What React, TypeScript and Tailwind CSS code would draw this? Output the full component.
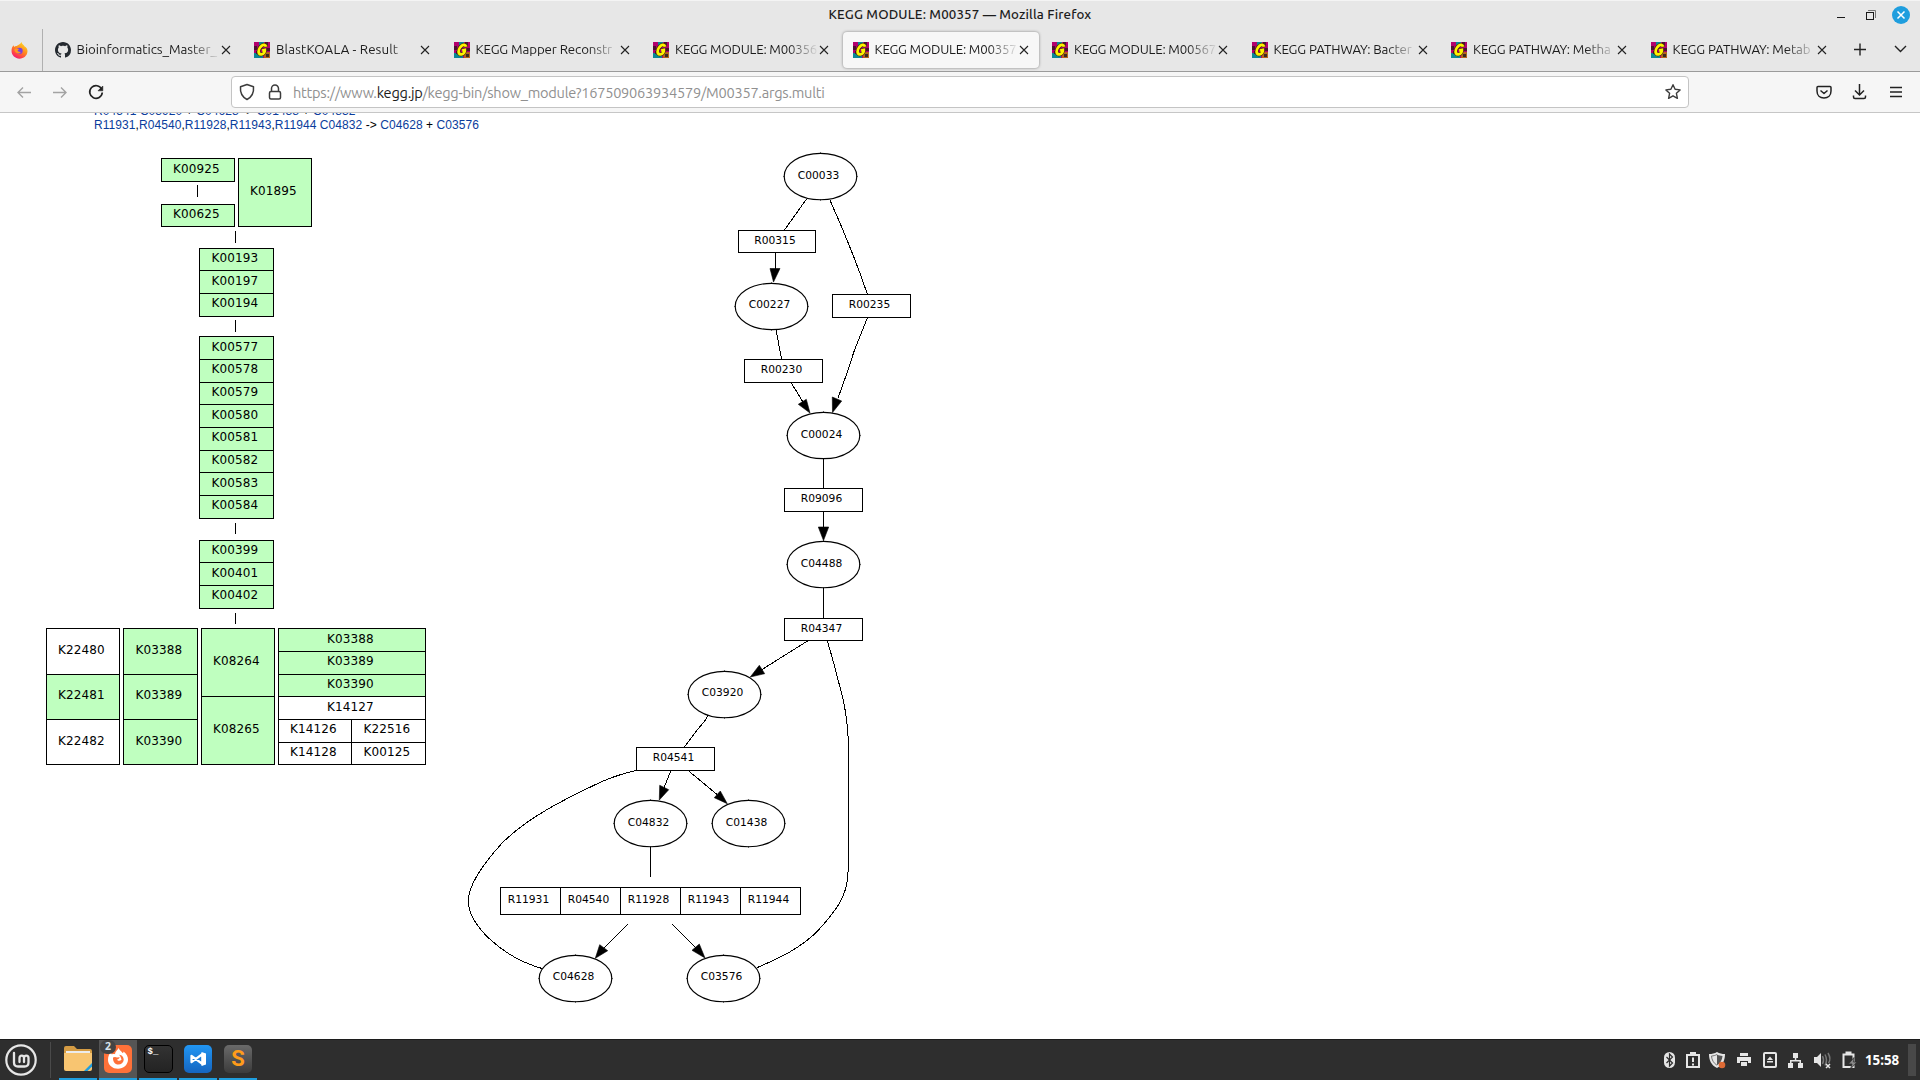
import React from "react";

function KeggIcon() {
  return (
    <svg width="16" height="16" viewBox="0 0 16 16" className="shrink-0">
      <rect width="16" height="16" fill="#b3006b" />
      <path d="M5 0h5v3H5zM0 11h4v5H0zM4 12h5v4H4z" fill="#0b8793" />
      <path d="M0 4h3v4H0zM11 0h3v3h-3zM13 6h3v3h-3zM2 9h2v3H2z" fill="#4a1230" />
      <path d="M10 10h6v6h-6z" fill="#b5651d" />
      <path d="M12 12h3v3h-3z" fill="#3d2b1f" />
      <path
        d="M12 4.800C11.600 2.600 9 2.300 7.400 4 5.300 6.100 4 9.400 5 11.300c1 1.800 3.900 1.300 5.100-.6.600-1 .9-1.900.7-2.700L8.200 8.600"
        fill="none"
        stroke="#3a2a10"
        strokeWidth="4"
      />
      <path
        d="M12 4.800C11.600 2.600 9 2.300 7.400 4 5.300 6.100 4 9.400 5 11.300c1 1.800 3.900 1.300 5.100-.6.600-1 .9-1.900.7-2.700L8.200 8.600"
        fill="none"
        stroke="#fff200"
        strokeWidth="2.800"
      />
    </svg>
  );
}

function GithubIcon() {
  return (
    <svg width="16" height="16" viewBox="0 0 16 16" className="shrink-0">
      <path
        fill="#24292f"
        d="M8 0C3.58 0 0 3.58 0 8c0 3.54 2.29 6.53 5.47 7.59.4.07.55-.17.55-.38 0-.19-.01-.82-.01-1.490-2.010.37-2.530-.49-2.690-.94-.09-.23-.48-.94-.82-1.130-.28-.15-.68-.52-.01-.53.63-.01 1.080.58 1.230.82.72 1.210 1.870.87 2.330.66.07-.52.28-.87.51-1.070-1.780-.2-3.640-.89-3.640-3.950 0-.87.31-1.590.82-2.150-.08-.2-.36-1.020.08-2.120 0 0 .67-.21 2.200.82.64-.18 1.320-.27 2-.27s1.360.09 2 .27c1.530-1.040 2.200-.82 2.200-.82.44 1.100.16 1.920.08 2.120.51.56.82 1.270.82 2.150 0 3.070-1.870 3.750-3.650 3.950.29.25.54.73.54 1.480 0 1.070-.01 1.930-.01 2.200 0 .21.15.46.55.38A8.010 8.010 0 0 0 16 8c0-4.420-3.580-8-8-8z"
      />
    </svg>
  );
}

function FirefoxIcon() {
  return (
    <svg width="17" height="17" viewBox="0 0 16 16">
      <defs>
        <linearGradient id="ff" x1="0.8" y1="0" x2="0.2" y2="1">
          <stop offset="0" stopColor="#ffe226" />
          <stop offset="0.45" stopColor="#ff8a1e" />
          <stop offset="0.8" stopColor="#ff3750" />
          <stop offset="1" stopColor="#e31587" />
        </linearGradient>
      </defs>
      <path
        d="M10 0c.2 1.600 1 2.300 2 3 .4.400.5.600.6 1C14.700 5 15.700 7 15.500 9c-.3 4-3.500 6.700-7.500 6.700S.5 12.500.5 8.500c0-2.300.5-4 2-5.500l.4 1.700C3.600 4 4.500 3.700 5.400 3.800 6.500 2.500 8.700 2.500 10 0z"
        fill="url(#ff)"
      />
      <circle cx="8" cy="8.300" r="3" fill="#7a3fe0" />
      <path d="M3 7c1.500-1.500 3.500-1 4.800-.3-1 .4-1.600 1.300-1.600 1.800 1 .8 2.300.6 3 1.300C7.500 11.500 4 11 3 7z" fill="#ff9820" />
    </svg>
  );
}

interface TabInfo {
  title: string;
  spacing: string;
  github?: boolean;
  active?: boolean;
}

const TABS: TabInfo[] = [
  { title: "Bioinformatics_Master_", spacing: "tracking-[-0.06px]", github: true },
  { title: "BlastKOALA - Result", spacing: "tracking-[0.13px]" },
  { title: "KEGG Mapper Reconstr", spacing: "tracking-[-0.1px]" },
  { title: "KEGG MODULE: M00356", spacing: "tracking-[-0.2px]" },
  { title: "KEGG MODULE: M00357", spacing: "tracking-[-0.2px]", active: true },
  { title: "KEGG MODULE: M00567", spacing: "tracking-[-0.2px]" },
  { title: "KEGG PATHWAY: Bacter", spacing: "tracking-[-0.12px]" },
  { title: "KEGG PATHWAY: Metha", spacing: "tracking-[-0.12px]" },
  { title: "KEGG PATHWAY: Metab", spacing: "tracking-[-0.12px]" },
];

function Tab({ title, spacing, github, active }: TabInfo) {
  return (
    <div className="flex h-[44px] w-[199.5px] shrink-0 items-center px-[2px]">
      <div
        className={
          "flex h-9 w-full items-center rounded-[4px] pl-[9.5px] " +
          (active ? "bg-[#f7f7f7] shadow-[0_0_3px_rgba(0,0,0,0.45)]" : "")
        }
      >
        {github ? <GithubIcon /> : <KeggIcon />}
        <div className="ml-[6px] w-[144px] whitespace-nowrap text-[13.3px] leading-5 text-[#1c1c1c] [mask-image:linear-gradient(to_right,black_78%,transparent_100%)]">
          <span className={spacing}>{title}</span>
        </div>
        <svg width="10" height="10" viewBox="0 0 10 10" className="shrink-0">
          <path d="M1 1l8 8M9 1l-8 8" stroke="#222" strokeWidth="1.100" />
        </svg>
      </div>
    </div>
  );
}

function Chrome() {
  return (
    <div className="font-['Ubuntu','Noto_Sans',sans-serif]">
      <div className="grid h-7 grid-cols-[1fr_auto_1fr] items-center border-t border-[#f4f4f4] bg-[#e7e7e7]">
        <div />
        <div className="text-[13.3px] font-medium tracking-[0.15px] text-[#1c1c1c]">
          KEGG MODULE: M00357 — Mozilla Firefox
        </div>
        <div className="flex h-full items-center justify-end pr-[10px]">
          <svg width="80" height="22" viewBox="0 0 80 22">
            <path d="M7 13.500h8" stroke="#1a1a1a" />
            <rect x="36.500" y="8.500" width="7" height="7" fill="none" stroke="#1a1a1a" />
            <path d="M38 6.500h7.500V14" fill="none" stroke="#777" />
            <circle cx="71" cy="11" r="9" fill="#1f9ede" />
            <path d="M67.500 7.500l7 7M74.500 7.500l-7 7" stroke="#fff" strokeWidth="1.500" />
          </svg>
        </div>
      </div>
      <div className="flex h-[44px] items-center border-b border-[#9b9b9b] bg-[#e7e7e7] pt-px">
        <div className="flex h-full w-[43px] shrink-0 items-center border-r border-[#b0b0b0] pl-[11px]">
          <FirefoxIcon />
        </div>
        {TABS.map((t, i) => (
          <Tab key={i} {...t} />
        ))}
        <svg width="60" height="20" viewBox="0 0 60 20" className="ml-[11px]" fill="none" stroke="#222" strokeWidth="1.400">
          <path d="M4 9.500h12M10 3.500v12M45 6l5.500 5.500L56 6" />
        </svg>
      </div>
      <div className="flex h-[41px] items-center border-b border-[#c6c6c6] bg-[#f6f6f6]">
        <div className="w-[231px] shrink-0">
          <svg width="120" height="24" viewBox="0 0 120 24" fill="none" strokeWidth="1.400">
            <path d="M31 12.500H18M23 7.500l-5 5 5 5M53 12.500h13M61 7.500l5 5-5 5" stroke="#a3a3a3" />
            <path d="M101.700 9.200A6.300 6.300 0 1 0 102.300 12.500" stroke="#222" strokeWidth="1.700" />
            <path d="M102.800 6v4.800h-4.800z" fill="#222" stroke="#222" strokeWidth=".6" />
          </svg>
        </div>
        <div className="flex h-8 w-[1458px] items-center rounded-[4px] border border-[#c4c4c4] bg-white">
          <svg width="61" height="24" viewBox="0 0 61 24" fill="none" stroke="#3c3c3c" strokeWidth="1.500">
            <path d="M15 4.500l6.500 2.300c.5 5.500-1.200 10-6.500 12.700C9.700 16.800 8 12.300 8.500 6.800z" strokeLinejoin="round" />
            <rect x="37.500" y="11.500" width="11" height="7.500" rx="1.500" />
            <path d="M39.500 11V8.500a3.500 3.500 0 0 1 7 0V11" />
          </svg>
          <span className="relative top-px text-[14.6px] leading-6 tracking-[-0.25px] whitespace-nowrap text-[#909090]">
            https://www.<span className="text-[#1c1c1c]">kegg.jp</span>/kegg-bin/show_module?167509063934579/M00357.args.multi
          </span>
          <svg width="18" height="18" viewBox="0 0 18 18" className="mr-[6px] ml-auto" fill="none" stroke="#3c3c3c" strokeWidth="1.400">
            <path d="M9 1.700l2.100 4.600 5 .6-3.700 3.400 1 5L9 12.800l-4.400 2.500 1-5L1.900 6.900l5-.6z" strokeLinejoin="round" />
          </svg>
        </div>
        <svg width="100" height="24" viewBox="0 0 100 24" className="ml-auto mr-[10px]" fill="none" stroke="#222" strokeWidth="1.500">
          <path d="M8 6.500h12q1 0 1 1V11c0 4.500-3 7-7 7s-7-2.500-7-7V7.500q0-1 1-1zM10.500 10.500l3.500 3 3.500-3" strokeLinejoin="round" />
          <path d="M49.500 4v10.500M45 10.500l4.500 4.500 4.500-4.500M43.500 15.500v1.500q0 1.500 1.500 1.500h9q1.500 0 1.500-1.500v-1.500" />
          <path d="M80 7.500h12M80 12h12M80 16.500h12" strokeWidth="1.300" />
        </svg>
      </div>
    </div>
  );
}

function Ids({ ids }: { ids: string[] }) {
  return (
    <>
      {ids.map((id, i) => (
        <React.Fragment key={id}>
          {i > 0 && ","}
          <span className="text-[#0a3c9c]">{id}</span>
        </React.Fragment>
      ))}
    </>
  );
}

const G = "bg-[#bfffbf]";
const W = "bg-white";

interface CellProps {
  id: string;
  size: string;
  tone?: string;
  last?: boolean;
  up?: boolean;
}

function Cell({ id, size, tone = G, last = false, up = false }: CellProps) {
  return (
    <div className={`flex items-center justify-center border-x border-t border-black pr-[3px] ${last ? "border-b" : ""} ${size} ${tone}`}>
      <span className={up ? "pb-1" : "pb-0.5"}>{id}</span>
    </div>
  );
}

function Tick({ gap }: { gap: string }) {
  return <div className={`w-px shrink-0 bg-black ${gap}`} />;
}

function ModuleMap() {
  return (
    <div className="ml-[46px] flex w-[380px] flex-col pt-[45px] font-['DejaVu_Sans',sans-serif] text-[12px] leading-3 tracking-[0.12px] text-black">
      <div className="ml-[115px] flex gap-[3px]">
        <div className="flex w-[74px] flex-col">
          <Cell id="K00925" size="h-6" last />
          <Tick gap="mt-[3px] ml-[36px] h-3" />
          <Cell id="K00625" size="mt-[7px] h-[23px]" last up />
        </div>
        <div className="w-[74px]">
          <Cell id="K01895" size="h-[69px]" last up />
        </div>
      </div>
      <div className="ml-[153px] flex w-[75px] flex-col">
        <Tick gap="mt-1 ml-[36px] h-3" />
        <Cell id="K00193" size="mt-[5px] h-[22px]" up />
        <Cell id="K00197" size="h-[23px]" />
        <Cell id="K00194" size="h-6" last up />
        <Tick gap="mt-[3px] ml-[36px] h-3" />
        <Cell id="K00577" size="mt-1 h-[23px]" />
        <Cell id="K00578" size="h-[23px]" up />
        <Cell id="K00579" size="h-[22px]" up />
        <Cell id="K00580" size="h-[23px]" />
        <Cell id="K00581" size="h-[23px]" up />
        <Cell id="K00582" size="h-[22px]" up />
        <Cell id="K00583" size="h-[23px]" />
        <Cell id="K00584" size="h-6" last up />
        <Tick gap="mt-1 ml-[36px] h-[11px]" />
        <Cell id="K00399" size="mt-[6px] h-[22px]" up />
        <Cell id="K00401" size="h-[23px]" />
        <Cell id="K00402" size="h-6" last up />
        <Tick gap="mt-1 ml-[36px] h-[11px]" />
      </div>
      <div className="mt-1 flex gap-[3px]">
        <div className="w-[74px]">
          <Cell id="K22480" size="h-[46px]" tone={W} up />
          <Cell id="K22481" size="h-[45px]" up />
          <Cell id="K22482" size="h-[46px]" tone={W} last />
        </div>
        <div className="w-[75px]">
          <Cell id="K03388" size="h-[46px]" up />
          <Cell id="K03389" size="h-[45px]" up />
          <Cell id="K03390" size="h-[46px]" last />
        </div>
        <div className="w-[74px]">
          <Cell id="K08264" size="h-[68px]" up />
          <Cell id="K08265" size="h-[69px]" last up />
        </div>
        <div className="w-[148px]">
          <Cell id="K03388" size="h-[23px]" />
          <Cell id="K03389" size="h-[23px]" up />
          <Cell id="K03390" size="h-[22px]" up />
          <Cell id="K14127" size="h-[23px]" tone={W} />
          <div className="flex">
            <div className="w-[74px]">
              <Cell id="K14126" size="h-[23px]" tone={W} up />
              <Cell id="K14128" size="h-[23px]" tone={W} last up />
            </div>
            <div className="-ml-px w-[75px]">
              <Cell id="K22516" size="h-[23px]" tone={W} up />
              <Cell id="K00125" size="h-[23px]" tone={W} last up />
            </div>
          </div>
        </div>
      </div>
    </div>
  );
}

const COMPOUNDS: [string, number, number, number][] = [
  ["C00033", 820.5, 176.5, 179.3],
  ["C00227", 771.5, 306.5, 308.3],
  ["C00024", 823.5, 435.5, 438.3],
  ["C04488", 823.5, 564.5, 567.3],
  ["C03920", 724.5, 694.5, 696.3],
  ["C04832", 650.5, 823.5, 826.3],
  ["C01438", 748.5, 823.5, 826.3],
  ["C04628", 575.5, 978.5, 980.3],
  ["C03576", 723.5, 978.5, 980.3],
];

const REACTIONS: [string, number, number, number, number][] = [
  ["R00315", 738.5, 230.5, 77, 22],
  ["R00235", 832.5, 294.5, 78, 23],
  ["R00230", 744.5, 359.5, 78, 23],
  ["R09096", 784.5, 488.5, 78, 23],
  ["R04347", 784.5, 618.5, 78, 22],
  ["R04541", 636.5, 747.5, 78, 23],
  ["R11931", 500.5, 887.5, 60, 27],
  ["R04540", 560.5, 887.5, 60, 27],
  ["R11928", 620.5, 887.5, 60, 27],
  ["R11943", 680.5, 887.5, 60, 27],
  ["R11944", 740.5, 887.5, 60, 27],
];

const EDGES = [
  "M806.500 199L784.500 230",
  "M829.700 199.500Q852 249 867.500 294.500",
  "M776 253L775 270",
  "M776 330L781.700 359.500",
  "M791 382.500L803 402",
  "M867.500 317.500L854.500 350L847 373L838 398",
  "M823.500 458.500V488.500M823.500 511.500V528M823.500 587.500V618.500",
  "M807.500 641L762 669.500",
  "M827.300 641C834 662 840 688 843.500 701C848 725 848.500 735 848.500 762V862C848 882 847 890 838.300 905C832 915 826 922 816.700 932C800 948 782 957 757.300 967.500",
  "M708 715.500L705.500 720L698 729L684.300 747",
  "M670.700 771L664 788",
  "M688.700 771L717 794.500",
  "M636.300 770.500C612 776 600 782 573.300 795.500C550 807 520 825 501.700 843.500C485 862 469 884 468.300 900C468 925 502 957 542 968.500",
  "M650.500 847V876.500",
  "M627.700 924.500L604 948",
  "M672.300 924.500L696 948",
];

const ARROWS = [
  "773.500,282 770,268.500 780,268.500",
  "810,413 798.300,404.300 806.300,399.300",
  "832.500,412.500 832.300,397 841.700,401",
  "823.500,540.500 818.300,527 828.700,527",
  "750.300,677 759.300,665.300 764.700,673.700",
  "659.300,800 659.700,785.300 668.700,789.700",
  "727.300,803.700 714.300,797.700 720.300,791",
  "595.300,958.300 599.700,944.700 607.700,950.700",
  "705,958 692,950.300 699.300,944",
];

function ReactionGraph() {
  return (
    <svg
      width="560"
      height="910"
      viewBox="440 113 560 910"
      className="-ml-[1px] shrink-0"
      fontFamily="DejaVu Sans, sans-serif"
      fontSize="10.700"
      textAnchor="middle"
    >
      <g fill="none" stroke="#000" shapeRendering="crispEdges">
        {EDGES.map((d) => (
          <path key={d} d={d} />
        ))}
      </g>
      {ARROWS.map((p) => (
        <polygon key={p} points={p} stroke="#000" strokeWidth="0.600" />
      ))}
      {COMPOUNDS.map(([id, cx, cy, base]) => (
        <g key={id}>
          <ellipse cx={cx} cy={cy} rx="36.300" ry="23.200" fill="#fff" stroke="#000" strokeWidth="1.150" />
          <path d={`M${cx - 37} ${cy}h1M${cx + 36} ${cy}h1M${cx} ${cy - 24}v1M${cx} ${cy + 23}v1`} stroke="#000" />
          <text x={cx - 2} y={base}>
            {id}
          </text>
        </g>
      ))}
      {REACTIONS.map(([id, x, y, w, h]) => (
        <g key={id}>
          <rect x={x} y={y} width={w} height={h} fill="#fff" stroke="#000" />
          <text x={x + w / 2 - 2} y={y + h / 2 + (h === 22 ? 2.6 : 2.1)}>
            {id}
          </text>
        </g>
      ))}
    </svg>
  );
}

function Launcher({ children, active, badge }: { children: React.ReactNode; active?: boolean; badge?: string }) {
  return (
    <div
      className={
        "relative flex h-full w-[38px] items-start justify-center border-b-2 border-[#1f9ede] pt-[5px] " +
        (active ? "bg-[#555]" : "")
      }
    >
      {children}
      {badge && (
        <span className="absolute top-0 left-px flex h-[14px] w-4 items-center justify-center rounded-full bg-[#444] text-[10.500px] font-bold text-[#d8e4ee]">
          {badge}
        </span>
      )}
    </div>
  );
}

function Taskbar() {
  return (
    <div className="flex h-[41px] items-center border-t border-[#1c1c1c] bg-[#2e2e2e] font-['Noto_Sans',sans-serif] text-white">
      <svg width="32" height="32" viewBox="0 0 32 32" className="ml-[5px]" fill="none" stroke="#e6e6e6">
        <circle cx="16" cy="16" r="14.700" strokeWidth="2.200" />
        <path
          d="M9 9v9.500q0 4 4 4h6.500q4 0 4-4V14q0-2.400-2.200-2.400T19 14v4M19 14q0-2.400-2.200-2.400T14.500 14v4"
          strokeWidth="2.300"
          strokeLinecap="round"
        />
      </svg>
      <div className="ml-[13px] h-9 w-px bg-[#4a4a4a]" />
      <div className="ml-2 flex h-full gap-[2px]">
        <Launcher>
          <svg width="28" height="28" viewBox="0 0 28 28">
            <path d="M0 3q0-2 2-2h8l3 3h13q2 0 2 2v8H0z" fill="#d59c44" />
            <rect x="2" y="6" width="24" height="5" fill="#ececec" />
            <path d="M0 8h28v16q0 2-2 2H2q-2 0-2-2z" fill="#f8c571" />
            <path d="M20 26l8-8v3.500L23.500 26z" fill="#1f9ede" />
          </svg>
        </Launcher>
        <Launcher active badge="2">
          <svg width="28" height="28" viewBox="0 0 28 28">
            <rect width="28" height="28" rx="5" fill="#ff7139" />
            <path
              d="M14.500 3c1 2.500 3 3.200 4 5 1-.2 1-.8 1-1.500 3 2 4.700 5 4.500 8.300-.3 5.200-4.500 9-10 9S4 20 4 15c0-3.500 1-6 3-8l.8 2.500c1.200-.6 2.500-.5 3.300-.2C11 6.500 13.500 5.500 14.500 3z"
              fill="#fff"
            />
            <path d="M9 12.500c1.300-.9 3-.7 4 .1l2.600-.4c.2 1-1 1.800-2.600 2.400.7 1.500 3 1.700 4.500.2-.6-2.400-1.300-4-2.700-5 3.500.2 5 2.700 4.900 5.300-.2 2.700-2.500 4.500-5.300 4.500-3.500 0-5.700-3.100-5.400-7.100z" fill="#ff7139" />
          </svg>
        </Launcher>
        <Launcher>
          <div className="h-7 w-[29px] rounded-[5px] border border-black bg-linear-to-b from-[#333] to-[#232323] pl-[3px] font-['Liberation_Mono',monospace] text-[9px] leading-[12px] font-bold">
            $_
          </div>
        </Launcher>
        <Launcher>
          <svg width="28" height="28" viewBox="0 0 28 28">
            <defs>
              <linearGradient id="vs" x1="0" y1="0" x2="0" y2="1">
                <stop offset="0" stopColor="#2196f3" />
                <stop offset="1" stopColor="#1565c0" />
              </linearGradient>
            </defs>
            <rect width="28" height="28" rx="5" fill="url(#vs)" />
            <path d="M7.500 10.800L18.500 19V9L7.500 17.200z" fill="none" stroke="#fff" strokeWidth="2.200" strokeLinejoin="round" />
            <path d="M17.500 7l4.500 1.500v11L17.500 21z" fill="#fff" />
          </svg>
        </Launcher>
        <Launcher>
          <div className="flex size-7 items-center justify-center rounded-[5px] bg-linear-to-b from-[#6a6a6a] to-[#3c3c3c] font-['Roboto',sans-serif] text-[22px] leading-7 font-bold text-[#ff9c1a]">
            S
          </div>
        </Launcher>
      </div>
      <svg width="210" height="24" viewBox="1655 0 210 24" className="ml-auto" fill="#e6e6e6">
        <rect x="1664" y="4" width="11" height="16" rx="5.500" />
        <path d="M1666.500 9l6 6-3 3V6l3 3-6 6" fill="none" stroke="#2e2e2e" strokeWidth="1.200" />
        <path d="M1687 7h12v12h-12zM1691 7V5h4v2" fill="none" stroke="#e6e6e6" strokeWidth="2" />
        <path d="M1692 9.500h2v4.500h-2zM1692 15.500h2v2h-2z" />
        <path d="M1717 4c2.500 1.500 5 2 8 2 0 6-2 11-8 14-6-3-8-8-8-14 3 0 5.500-.5 8-2z" />
        <path d="M1717 6.500c2 1 3.500 1.400 5.500 1.500-.3 4-2 7-5.500 9.300z" fill="#555" />
        <path d="M1717 6.500c-2 1-3.500 1.400-5.500 1.500.3 4 2 7 5.500 9.300" fill="none" stroke="#777" />
        <circle cx="1722" cy="17" r="3.300" fill="#dd6a35" />
        <path d="M1740 5h8v3h-8zM1737 9h14v6h-3v-2h-8v2h-3zM1741 14h6v4h-6z" />
        <rect x="1764" y="5" width="12" height="14" rx="1" fill="none" stroke="#e6e6e6" strokeWidth="2" />
        <path d="M1770 8.500l3 3.500h-6zM1767 13h6v1.500h-6z" />
        <path d="M1793 5h5v5h-5zM1788 15h5v5h-5zM1798 15h5v5h-5zM1794.800 10h1.500v2h4.700v3h-1.500v-1.500h-8V15h-1.500v-3h4.800z" />
        <path d="M1814 9h3l4-4v14l-4-4h-3z" />
        <path d="M1822.500 8q2 4 0 8M1825 6.500q3 5.500 0 11M1828 5q3.500 6 .5 10" fill="none" stroke="#777" strokeWidth="1.500" />
        <path d="M1826 16l4 4M1830 16l-4 4" stroke="#e6e6e6" strokeWidth="1.500" />
        <path d="M1843.500 6.500h10v12.500h-10zM1846.500 6V4.500h4V6" fill="none" stroke="#e6e6e6" strokeWidth="2" />
        <path d="M1854 9.500l-5.500 6.500h3.500l-1.500 5 6.500-7h-3.500z" fill="#8a8a8a" stroke="#2e2e2e" strokeWidth=".8" />
      </svg>
      <div className="w-[34px] text-[13.300px] leading-5 font-bold whitespace-nowrap">15:58</div>
      <div className="mr-1 ml-[9px] h-8 w-2 bg-[#484848]" />
    </div>
  );
}

export default function App() {
  return (
    <div className="flex h-[1080px] w-[1920px] flex-col overflow-hidden bg-white">
      <Chrome />
      <div className="flex min-h-0 flex-1 items-start overflow-hidden">
        <div className="w-[441px] shrink-0">
          <div className="-mt-[9px] h-[9px]" />
          <div className="-mt-[9px] ml-[94px] h-[30px] font-['Liberation_Sans',Arial,sans-serif] text-[12px] leading-[14px] tracking-[0.07px] whitespace-nowrap text-black">
            <div>
              <Ids ids={["R04541"]} /> <Ids ids={["C03920"]} /> + <Ids ids={["C04628"]} /> -&gt; <Ids ids={["C01438"]} /> +{" "}
              <Ids ids={["C04832"]} />
            </div>
            <div>
              <Ids ids={["R11931", "R04540", "R11928", "R11943", "R11944"]} /> <Ids ids={["C04832"]} /> -&gt;{" "}
              <Ids ids={["C04628"]} /> + <Ids ids={["C03576"]} />
            </div>
          </div>
          <div className="-mt-[21px]">
            <ModuleMap />
          </div>
        </div>
        <ReactionGraph />
      </div>
      <Taskbar />
    </div>
  );
}
